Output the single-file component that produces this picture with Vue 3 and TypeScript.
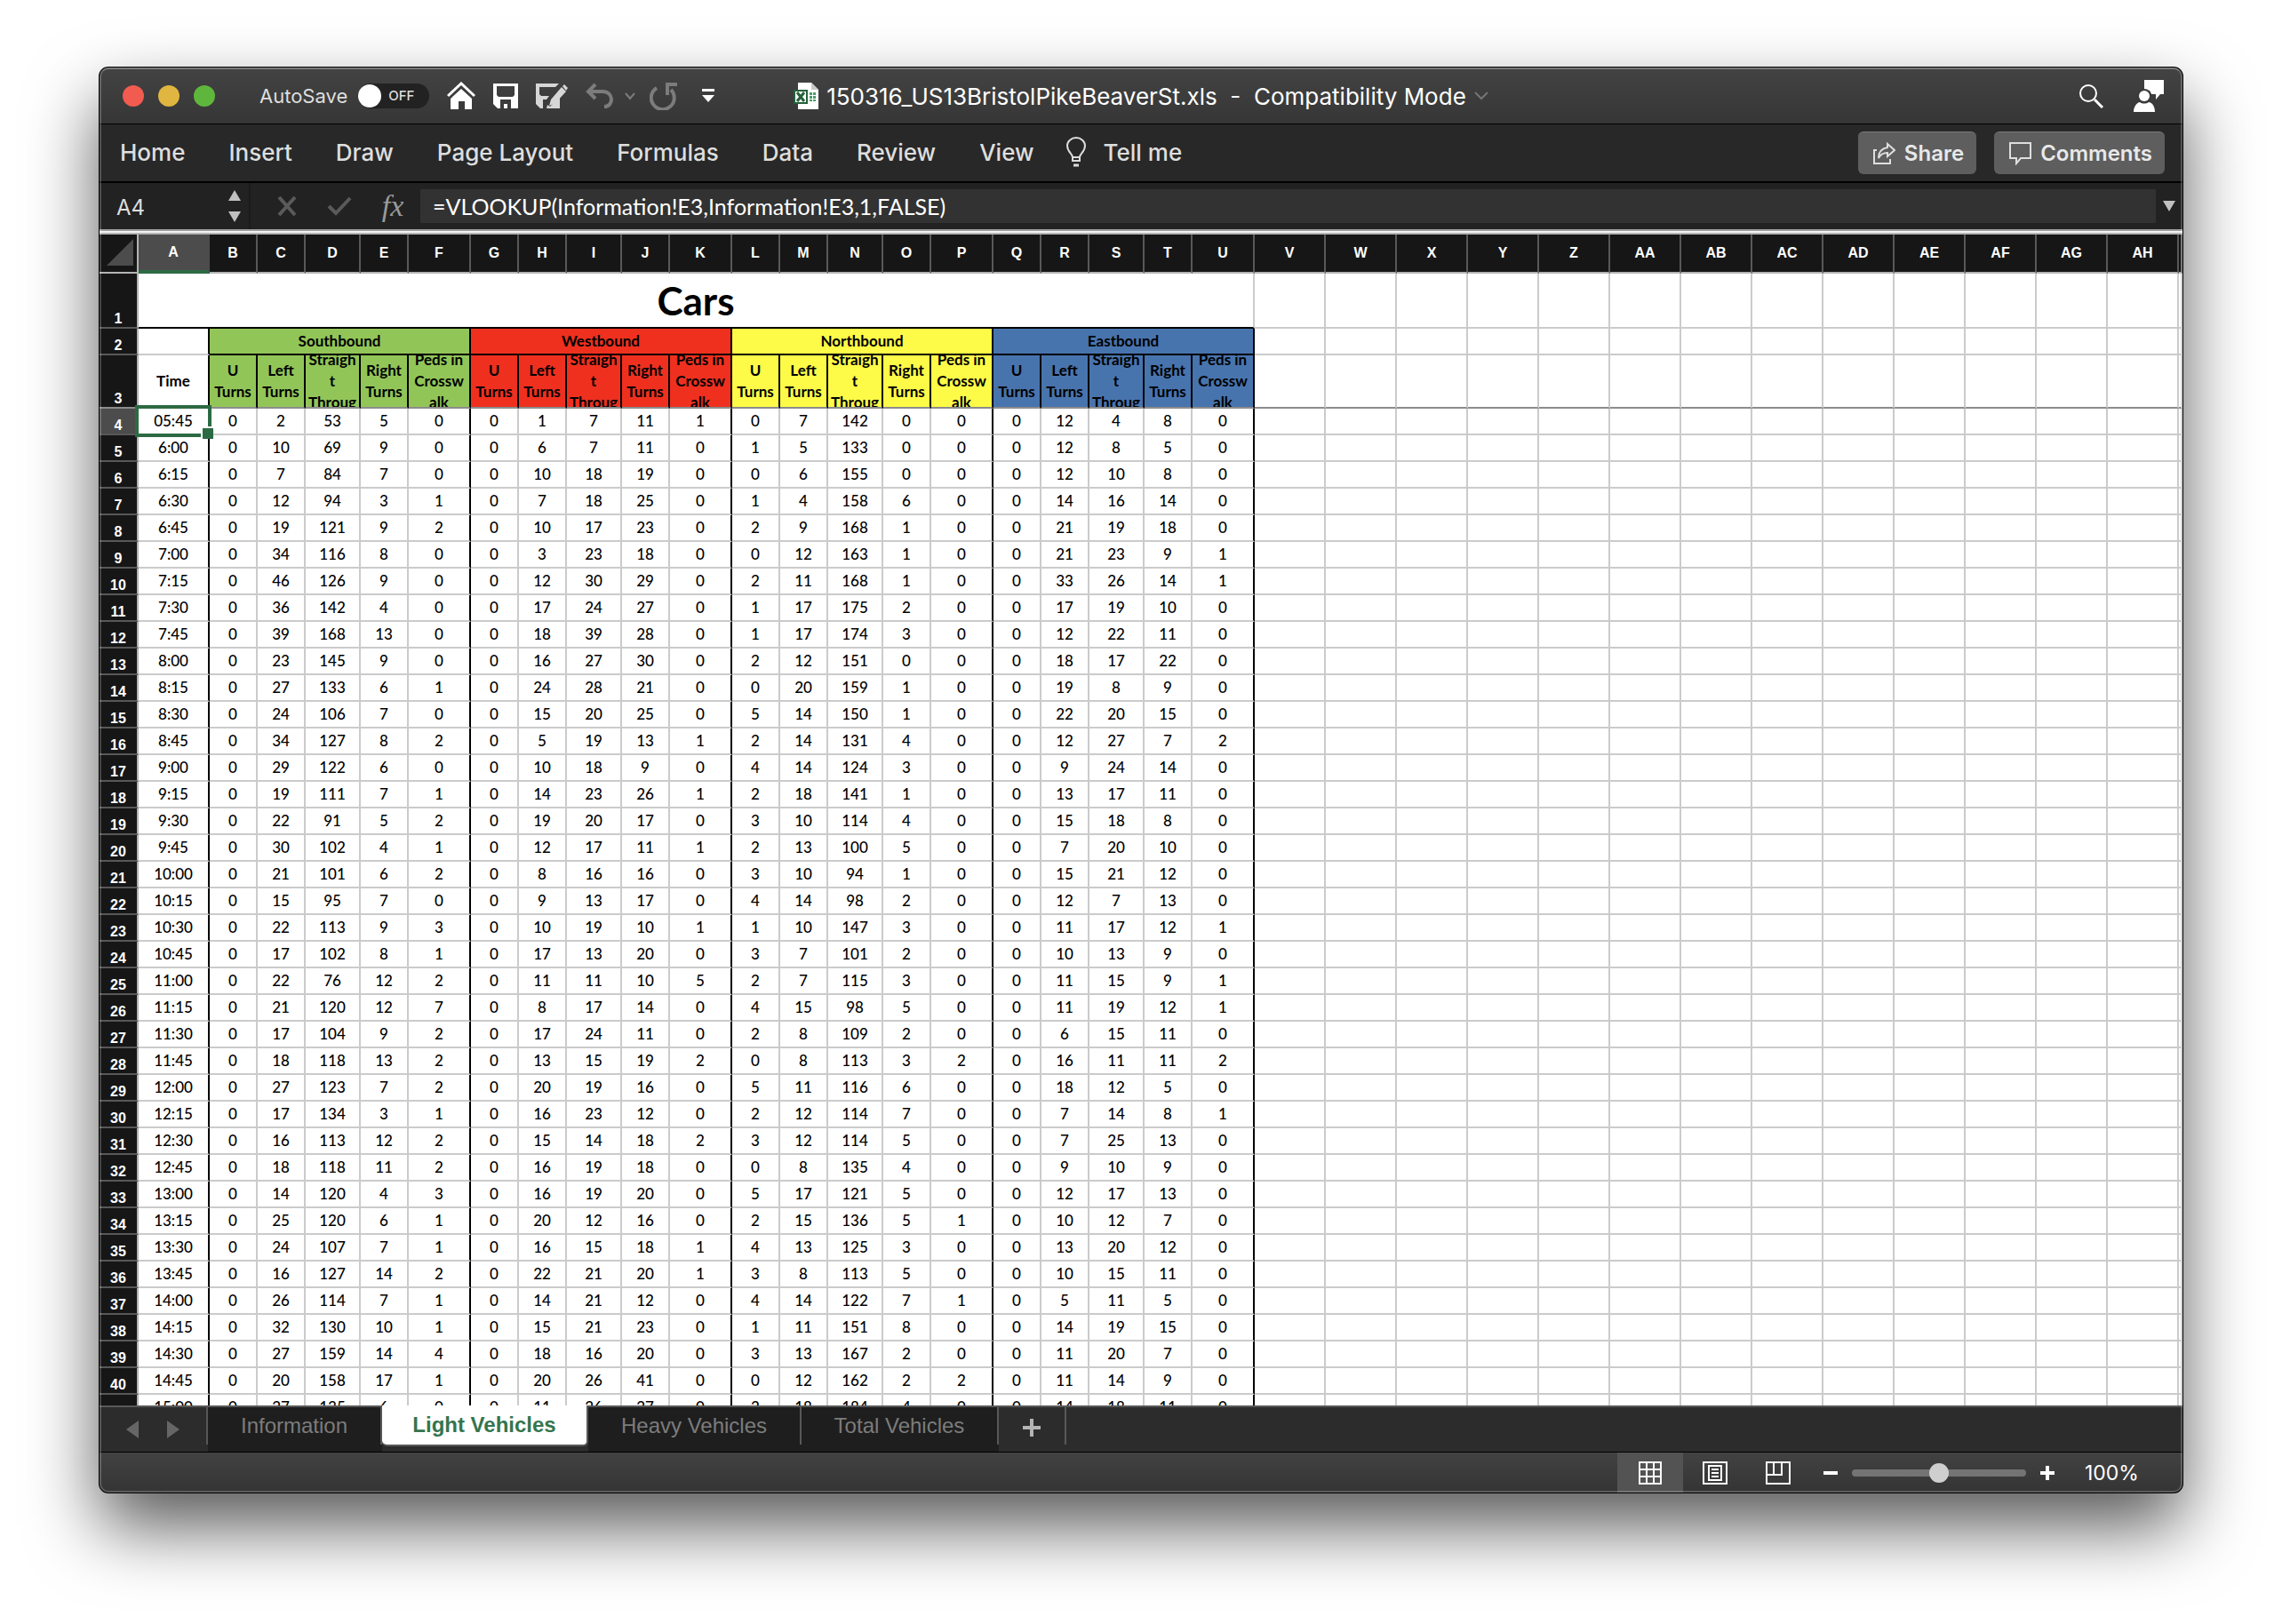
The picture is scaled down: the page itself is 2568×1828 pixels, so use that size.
<script setup lang="ts">
import { ref } from 'vue'

interface Column {
  name: string
  width: number
}

interface Group {
  name: string
  tone: string
}

interface SheetTab {
  name: string
  width: number
}

const ribbonTabs = ['Home', 'Insert', 'Draw', 'Page Layout', 'Formulas', 'Data', 'Review', 'View']

const groups: Group[] = [
  { name: 'Southbound', tone: 'green' },
  { name: 'Westbound', tone: 'red' },
  { name: 'Northbound', tone: 'yellow' },
  { name: 'Eastbound', tone: 'blue' },
]

const movements: string[][] = [
  ['U', 'Turns'],
  ['Left', 'Turns'],
  ['Straigh', 't', 'Throug'],
  ['Right', 'Turns'],
  ['Peds in', 'Crossw', 'alk'],
]

const movementWidths = [54, 54, 62, 54, 70]

function columnName(index: number): string {
  const letter = String.fromCharCode(65 + (index % 26))
  return index < 26 ? letter : 'A' + letter
}

const columns: Column[] = Array.from({ length: 34 }, (_, i) => ({
  name: columnName(i),
  width: i >= 1 && i <= 20 ? movementWidths[(i - 1) % 5] : 80,
}))

// Columns V and onward hold no data; the last one is the sliver at the window edge.
const emptyCount = 14

const rows: string[][] = `
05:45 0 2 53 5 0 0 1 7 11 1 0 7 142 0 0 0 12 4 8 0
6:00 0 10 69 9 0 0 6 7 11 0 1 5 133 0 0 0 12 8 5 0
6:15 0 7 84 7 0 0 10 18 19 0 0 6 155 0 0 0 12 10 8 0
6:30 0 12 94 3 1 0 7 18 25 0 1 4 158 6 0 0 14 16 14 0
6:45 0 19 121 9 2 0 10 17 23 0 2 9 168 1 0 0 21 19 18 0
7:00 0 34 116 8 0 0 3 23 18 0 0 12 163 1 0 0 21 23 9 1
7:15 0 46 126 9 0 0 12 30 29 0 2 11 168 1 0 0 33 26 14 1
7:30 0 36 142 4 0 0 17 24 27 0 1 17 175 2 0 0 17 19 10 0
7:45 0 39 168 13 0 0 18 39 28 0 1 17 174 3 0 0 12 22 11 0
8:00 0 23 145 9 0 0 16 27 30 0 2 12 151 0 0 0 18 17 22 0
8:15 0 27 133 6 1 0 24 28 21 0 0 20 159 1 0 0 19 8 9 0
8:30 0 24 106 7 0 0 15 20 25 0 5 14 150 1 0 0 22 20 15 0
8:45 0 34 127 8 2 0 5 19 13 1 2 14 131 4 0 0 12 27 7 2
9:00 0 29 122 6 0 0 10 18 9 0 4 14 124 3 0 0 9 24 14 0
9:15 0 19 111 7 1 0 14 23 26 1 2 18 141 1 0 0 13 17 11 0
9:30 0 22 91 5 2 0 19 20 17 0 3 10 114 4 0 0 15 18 8 0
9:45 0 30 102 4 1 0 12 17 11 1 2 13 100 5 0 0 7 20 10 0
10:00 0 21 101 6 2 0 8 16 16 0 3 10 94 1 0 0 15 21 12 0
10:15 0 15 95 7 0 0 9 13 17 0 4 14 98 2 0 0 12 7 13 0
10:30 0 22 113 9 3 0 10 19 10 1 1 10 147 3 0 0 11 17 12 1
10:45 0 17 102 8 1 0 17 13 20 0 3 7 101 2 0 0 10 13 9 0
11:00 0 22 76 12 2 0 11 11 10 5 2 7 115 3 0 0 11 15 9 1
11:15 0 21 120 12 7 0 8 17 14 0 4 15 98 5 0 0 11 19 12 1
11:30 0 17 104 9 2 0 17 24 11 0 2 8 109 2 0 0 6 15 11 0
11:45 0 18 118 13 2 0 13 15 19 2 0 8 113 3 2 0 16 11 11 2
12:00 0 27 123 7 2 0 20 19 16 0 5 11 116 6 0 0 18 12 5 0
12:15 0 17 134 3 1 0 16 23 12 0 2 12 114 7 0 0 7 14 8 1
12:30 0 16 113 12 2 0 15 14 18 2 3 12 114 5 0 0 7 25 13 0
12:45 0 18 118 11 2 0 16 19 18 0 0 8 135 4 0 0 9 10 9 0
13:00 0 14 120 4 3 0 16 19 20 0 5 17 121 5 0 0 12 17 13 0
13:15 0 25 120 6 1 0 20 12 16 0 2 15 136 5 1 0 10 12 7 0
13:30 0 24 107 7 1 0 16 15 18 1 4 13 125 3 0 0 13 20 12 0
13:45 0 16 127 14 2 0 22 21 20 1 3 8 113 5 0 0 10 15 11 0
14:00 0 26 114 7 1 0 14 21 12 0 4 14 122 7 1 0 5 11 5 0
14:15 0 32 130 10 1 0 15 21 23 0 1 11 151 8 0 0 14 19 15 0
14:30 0 27 159 14 4 0 18 16 20 0 3 13 167 2 0 0 11 20 7 0
14:45 0 20 158 17 1 0 20 26 41 0 0 12 162 2 2 0 11 14 9 0
15:00 0 27 135 6 0 0 11 26 27 0 2 18 184 4 0 0 14 18 11 0
`
  .trim()
  .split('\n')
  .map((line) => line.split(' '))

const sheetTabs: SheetTab[] = [
  { name: 'Information', width: 196 },
  { name: 'Light Vehicles', width: 232 },
  { name: 'Heavy Vehicles', width: 240 },
  { name: 'Total Vehicles', width: 222 },
]

const activeSheet = ref('Light Vehicles')
const autoSave = ref(false)
const cellName = ref('A4')
const formula = ref('=VLOOKUP(Information!E3,Information!E3,1,FALSE)')
const zoom = ref(100)
</script>

<template>
  <div class="desktop">
    <main class="window">
      <header class="titlebar">
        <div class="title-left">
          <div class="lights">
            <button class="light close" aria-label="Close"></button>
            <button class="light minimise" aria-label="Minimise"></button>
            <button class="light full" aria-label="Full screen"></button>
          </div>
          <label class="autosave">
            <span>AutoSave</span>
            <span class="switch">
              <input v-model="autoSave" type="checkbox" />
              <span class="switch-text">OFF</span>
            </span>
          </label>
          <div class="quick">
            <button aria-label="Home">
              <svg width="32" height="32" viewBox="0 0 32 32">
                <path d="M1 16 16 2l15 14" fill="none" stroke="#fff" stroke-width="3" />
                <path d="M4 19 16 8l12 11v12h-8v-9h-7v9H4z" fill="#fff" />
              </svg>
            </button>
            <button aria-label="Save">
              <svg width="28" height="28" viewBox="0 0 28 28">
                <path fill="#fff" fill-rule="evenodd" d="M0 0h28v28H5l-5-5zM4 3v10l2 2h16l2-2V3zM8 18v10h4v-5h4v5h4V18z" />
              </svg>
            </button>
            <button aria-label="Save As">
              <svg width="36" height="28" viewBox="0 0 36 28">
                <path fill="#d6d6d6" fill-rule="evenodd" d="M0 0h26l-4 4H4v8l2 2h9l-3 4H8v10h4l1-4 3 2 11-12v14H5l-5-5z" />
                <path fill="#d6d6d6" d="m17 18 12-14 5 5-12 13-7 3zM30 3l2-2 4 4-2 3z" />
              </svg>
            </button>
            <button class="undo" aria-label="Undo">
              <svg width="32" height="30" viewBox="0 0 32 30">
                <path d="M11 2 3 10l8 8M3 10h16c13 0 13 17 2 17" fill="none" stroke="#7c7c7c" stroke-width="4" />
              </svg>
            </button>
            <button class="undo-more" aria-label="Undo history">
              <svg width="12" height="10" viewBox="0 0 12 10">
                <path d="m1 2 5 6 5-6" fill="none" stroke="#7c7c7c" stroke-width="2" />
              </svg>
            </button>
            <button class="redo" aria-label="Repeat">
              <svg width="32" height="32" viewBox="0 0 32 32">
                <path d="M8 7a13 13 0 1 0 16 2M20 15V3h11" fill="none" stroke="#7c7c7c" stroke-width="4" />
              </svg>
            </button>
            <button class="more" aria-label="Customise toolbar">
              <svg width="16" height="16" viewBox="0 0 16 16">
                <path d="M1 0h14v3H1zM1 7h14l-7 8z" fill="#fff" />
              </svg>
            </button>
          </div>
        </div>
        <div class="document">
          <svg width="28" height="30" viewBox="0 0 28 30">
            <path d="M5 0h15l8 8v22H5z" fill="#fff" />
            <path d="M20 0v8h8z" fill="#c9c9c9" />
            <path d="M0 8h16v16H0z" fill="#25613c" />
            <path d="M2 10h12v12H2z" fill="#fff" />
            <path d="m4 11 8 10M12 11 4 21" stroke="#25613c" stroke-width="3" />
            <path d="M18 11h3v3h-3zM22 11h3v3h-3zM18 15h3v3h-3zM22 15h3v3h-3zM18 19h3v2h-3zM22 19h3v2h-3z" fill="#4b9b68" />
          </svg>
          <h1>150316_US13BristolPikeBeaverSt.xls&nbsp; -&nbsp; Compatibility Mode</h1>
          <svg width="16" height="10" viewBox="0 0 16 10">
            <path d="m1 1 7 7 7-7" fill="none" stroke="#757575" stroke-width="2" />
          </svg>
        </div>
        <div class="title-right">
          <button aria-label="Search">
            <svg width="28" height="28" viewBox="0 0 28 28">
              <g fill="none" stroke="#fff" stroke-width="2">
                <circle cx="11" cy="11" r="9" />
                <path d="m18 18 9 9" stroke-width="3" />
              </g>
            </svg>
          </button>
          <button aria-label="Account">
            <svg width="36" height="36" viewBox="0 0 36 36">
              <path d="M13 0h22v16h-4l-5 6v-6h-5l-2-4-6-1z" fill="#fff" />
              <circle cx="13" cy="18" r="8" fill="#3b3b3b" />
              <circle cx="13" cy="18" r="6" fill="#fff" />
              <path d="M1 36c0-6 4-11 7-11 3 2 7 2 10 0 4 0 7 5 7 11z" fill="#fff" />
            </svg>
          </button>
        </div>
      </header>

      <div class="ribbon">
        <nav class="ribbon-tabs">
          <button v-for="tab in ribbonTabs" :key="tab">{{ tab }}</button>
        </nav>
        <button class="tell">
          <svg width="22" height="34" viewBox="0 0 22 34">
            <g fill="none" stroke="#dcdcdc" stroke-width="2">
              <path d="M7 27v-4c0-4-6-6-6-13a10 9 0 0 1 20 0c0 7-6 9-6 13v4zM7 23h8" />
              <path d="M8 32h6" stroke-width="3" />
            </g>
          </svg>
          Tell me
        </button>
        <div class="actions">
          <button class="action">
            <svg width="25" height="26" viewBox="0 0 25 26">
              <g fill="none" stroke="#dedede" stroke-width="2">
                <path d="M4 9H1v15h18v-5" />
                <path d="M6 18c0-8 4-11 10-12V2l8 7-8 7v-4c-5 0-8 2-10 6z" />
              </g>
            </svg>
            Share
          </button>
          <button class="action">
            <svg width="25" height="26" viewBox="0 0 25 26">
              <path d="M1 1h23v17H13l-5 6v-6H1z" fill="none" stroke="#dedede" stroke-width="2" />
            </svg>
            Comments
          </button>
        </div>
      </div>

      <div class="formula-bar">
        <div class="name-box">
          <input v-model="cellName" aria-label="Name box" />
          <div class="stepper">
            <button aria-label="Previous"><svg width="14" height="12" viewBox="0 0 14 12"><path d="M7 0l7 12H0z" fill="#c0c0c0" /></svg></button>
            <button aria-label="Next"><svg width="14" height="12" viewBox="0 0 14 12"><path d="M7 12 0 0h14z" fill="#c0c0c0" /></svg></button>
          </div>
        </div>
        <button class="cancel" aria-label="Cancel">
          <svg width="22" height="22" viewBox="0 0 22 22"><path d="m2 1 18 20M20 1 2 21" stroke="#5a5a5a" stroke-width="4" /></svg>
        </button>
        <button class="enter" aria-label="Enter">
          <svg width="28" height="22" viewBox="0 0 28 22"><path d="m2 11 8 8L26 2" fill="none" stroke="#5a5a5a" stroke-width="4" /></svg>
        </button>
        <button class="fx" aria-label="Insert function">fx</button>
        <input v-model="formula" class="formula" aria-label="Formula" />
        <button class="expand" aria-label="Expand formula bar">
          <svg width="14" height="12" viewBox="0 0 14 12"><path d="M7 12 0 0h14z" fill="#c0c0c0" /></svg>
        </button>
      </div>

      <section class="sheet">
        <table>
          <colgroup>
            <col class="row-col" />
            <col v-for="c in columns" :key="c.name" :style="{ width: c.width + 'px' }" />
            <col />
          </colgroup>
          <thead>
            <tr class="letters">
              <th class="corner">
                <svg width="30" height="30" viewBox="0 0 30 30"><path d="M30 0v30H0z" fill="#4c4c4c" /></svg>
              </th>
              <th v-for="c in columns" :key="c.name" :class="{ current: c.name === 'A' }">{{ c.name }}</th>
              <th></th>
            </tr>
          </thead>
          <tbody>
            <tr class="row-title">
              <th class="num">1</th>
              <td colspan="21" class="heading">Cars</td>
              <td v-for="n in emptyCount" :key="n"></td>
            </tr>
            <tr>
              <th class="num">2</th>
              <td class="edge"></td>
              <td v-for="g in groups" :key="g.name" colspan="5" class="group" :class="g.tone">{{ g.name }}</td>
              <td v-for="n in emptyCount" :key="n"></td>
            </tr>
            <tr class="row-movements">
              <th class="num">3</th>
              <td class="edge time">Time</td>
              <template v-for="g in groups" :key="g.name">
                <td v-for="(m, i) in movements" :key="i" class="movement" :class="g.tone">
                  <div class="lines">
                    <span v-for="part in m" :key="part">{{ part }}</span>
                  </div>
                </td>
              </template>
              <td v-for="n in emptyCount" :key="n"></td>
            </tr>
            <tr v-for="(r, ri) in rows" :key="ri">
              <th class="num" :class="{ current: ri === 0 }">{{ ri + 4 }}</th>
              <td v-for="(v, ci) in r" :key="ci" :class="{ edge: ci % 5 === 0, selected: ri === 0 && ci === 0 }">
                {{ v }}<i v-if="ri === 0 && ci === 0" class="outline"></i>
              </td>
              <td v-for="n in emptyCount" :key="n"></td>
            </tr>
          </tbody>
        </table>
      </section>

      <footer>
        <div class="tabbar">
          <div class="tab-nav">
            <button aria-label="Previous sheet"><svg width="14" height="20" viewBox="0 0 14 20"><path d="M14 0v20L0 10z" fill="#666" /></svg></button>
            <button aria-label="Next sheet"><svg width="14" height="20" viewBox="0 0 14 20"><path d="M0 0v20l14-10z" fill="#666" /></svg></button>
          </div>
          <div
            v-for="tab in sheetTabs"
            :key="tab.name"
            class="tab-slot"
            :class="{ active: tab.name === activeSheet }"
            :style="{ width: tab.width + 'px' }"
          >
            <button @click="activeSheet = tab.name">{{ tab.name }}</button>
          </div>
          <div class="tab-slot add">
            <button aria-label="New sheet">
              <svg width="20" height="20" viewBox="0 0 20 20"><path d="M8 0h4v8h8v4h-8v8H8v-8H0V8h8z" fill="#b4b4b4" /></svg>
            </button>
          </div>
        </div>
        <div class="statusbar">
          <button class="view on" aria-label="Normal view">
            <svg width="26" height="26" viewBox="0 0 26 26">
              <path d="M1 1h24v24H1zM9 1v24M17 1v24M1 9h24M1 17h24" fill="none" stroke="#fff" stroke-width="2" />
            </svg>
          </button>
          <button class="view" aria-label="Page layout view">
            <svg width="28" height="26" viewBox="0 0 28 26">
              <path d="M1 1h26v24H1zM7 5h14v16H7zM10 9h8M10 13h8M10 17h8" fill="none" stroke="#fff" stroke-width="2" />
            </svg>
          </button>
          <button class="view" aria-label="Page break view">
            <svg width="28" height="26" viewBox="0 0 28 26">
              <path d="M1 1h26v24H1zM9 1v14M18 1v14H1" fill="none" stroke="#fff" stroke-width="2" />
            </svg>
          </button>
          <button class="zoom-out" aria-label="Zoom out">
            <svg width="16" height="16" viewBox="0 0 16 16"><path d="M0 6h16v4H0z" fill="#fff" /></svg>
          </button>
          <input v-model.number="zoom" type="range" min="0" max="200" aria-label="Zoom" />
          <button aria-label="Zoom in">
            <svg width="16" height="16" viewBox="0 0 16 16"><path d="M6 0h4v6h6v4h-6v6H6v-6H0V6h6z" fill="#fff" /></svg>
          </button>
          <output>{{ zoom }}%</output>
        </div>
      </footer>
    </main>
  </div>
</template>

<style>
body {
  margin: 0;
  background: #fff;
}
</style>

<style scoped>
* {
  box-sizing: border-box;
}

.desktop {
  display: flex;
  height: 100vh;
  padding: 76px 112px 148px;
  font-family: Inter, "Liberation Sans", sans-serif;
}

button,
input {
  margin: 0;
  padding: 0;
  border: 0;
  border-radius: 0;
  background: none;
  color: inherit;
  font: inherit;
  outline: 0;
}

button {
  display: flex;
  align-items: center;
  justify-content: center;
  white-space: nowrap;
}

svg {
  display: block;
  flex: none;
}

.window {
  position: relative;
  display: flex;
  flex: 1;
  flex-direction: column;
  min-width: 0;
  overflow: hidden;
  border-radius: 10px;
  background: #2c2c2c;
  color: #dedede;
  box-shadow: 0 0 0 1px #000, 0 38px 80px rgba(0, 0, 0, 0.66);
}

/* Light rim along the inside of the window frame */
.window::after {
  position: absolute;
  z-index: 3;
  inset: 0;
  border: 2px solid rgba(255, 255, 255, 0.2);
  border-top-color: rgba(255, 255, 255, 0.3);
  border-radius: 10px;
  pointer-events: none;
  content: "";
}

.titlebar {
  display: grid;
  flex: none;
  grid-template-columns: 1fr auto 1fr;
  align-items: center;
  height: 64px;
  border-bottom: 1px solid #000;
  background: linear-gradient(#434343, #363636);
}

.title-left,
.lights,
.autosave,
.quick,
.document,
.title-right {
  display: flex;
  align-items: center;
}

.lights {
  gap: 16px;
  margin-left: 26px;
}

.light {
  width: 24px;
  height: 24px;
  border-radius: 50%;
}

.close {
  background: #f25b50;
}

.minimise {
  background: #e0b640;
}

.full {
  background: #5fb63d;
}

.autosave {
  gap: 12px;
  margin-left: 50px;
  font-size: 22px;
}

.switch {
  display: flex;
  align-items: center;
  gap: 8px;
  width: 80px;
  height: 28px;
  border-radius: 14px;
  background: #222;
}

.switch input {
  width: 26px;
  height: 26px;
  border-radius: 50%;
  background: #fff;
  appearance: none;
}

.switch-text {
  font-size: 15px;
  font-weight: 500;
}

.quick {
  gap: 20px;
  margin-left: 20px;
}

.undo-more {
  margin-left: -8px;
}

.redo {
  margin-left: -4px;
}

.more {
  margin-left: 6px;
}

.document {
  gap: 9px;
  color: #fff;
}

.document h1 {
  margin: 0;
  padding-top: 2px;
  font-size: 26px;
  font-weight: 400;
}

.title-right {
  justify-content: flex-end;
  gap: 33px;
  margin-right: 20px;
}

.ribbon {
  display: flex;
  flex: none;
  align-items: center;
  height: 66px;
  padding: 0 20px 0 23px;
  border-bottom: 2px solid #000;
  background: #282828;
  font-size: 26px;
  font-weight: 500;
}

.ribbon-tabs {
  display: flex;
  gap: 49px;
}

.tell {
  gap: 20px;
  margin-left: 36px;
}

.ribbon-tabs,
.tell {
  padding-bottom: 2px;
}

.actions {
  display: flex;
  gap: 20px;
  margin-left: auto;
}

.action {
  gap: 10px;
  height: 48px;
  padding: 0 14px 0 17px;
  border-top: 1px solid #7a7a7a;
  border-radius: 6px;
  background: #5e5e5e;
  color: #e8e8e8;
  font-size: 24px;
  font-weight: 600;
}

.formula-bar {
  display: flex;
  flex: none;
  align-items: center;
  height: 52px;
  background: #222;
}

.name-box {
  display: flex;
  align-items: center;
  width: 170px;
  height: 52px;
  padding: 0 9px 0 19px;
  border-right: 2px solid #1b1b1b;
}

.name-box input {
  flex: 1;
  min-width: 0;
  padding-top: 2px;
  font-size: 24px;
}

.stepper {
  display: grid;
  gap: 12px;
}

.cancel {
  margin-left: 30px;
}

.enter {
  margin-left: 34px;
}

.fx {
  width: 32px;
  margin-left: 30px;
  color: #9a9a9a;
  font: italic 34px "Liberation Serif", serif;
}

.formula {
  flex: 1;
  min-width: 0;
  height: 38px;
  margin: 0 8px 0 15px;
  padding: 0 14px;
  background: #323232;
  color: #fff;
  font-family: Lato, sans-serif;
  font-size: 25px;
}

.expand {
  margin-right: 8px;
}

.sheet {
  flex: 1;
  min-height: 0;
  overflow: hidden;
  border-top: 2px solid #a0a0a0;
  background: #fff;
  color: #000;
  font-family: Lato, sans-serif;
}

.sheet::before {
  display: block;
  height: 4px;
  background: linear-gradient(#f2f2f2 50%, #b4b4b4 50%);
  content: "";
}

table {
  width: 100%;
  border-spacing: 0;
  table-layout: fixed;
}

.row-col {
  width: 44px;
}

th,
td {
  height: 30px;
  padding: 0;
  border: 0 solid #cbcbcb;
  border-width: 0 2px 2px 0;
  font-size: 17px;
  font-weight: 500;
  line-height: 24px;
  text-align: center;
  white-space: nowrap;
}

.letters th {
  height: 44px;
  border-right-color: #585858;
  border-bottom-color: #b4b4b4;
  background: #161616;
  color: #fff;
  font: 700 16px "Liberation Sans", sans-serif;
}

.letters .corner {
  padding: 0 0 2px 8px;
  border-right-color: #b4b4b4;
}

.letters .current {
  border-right-color: #4c4c4c;
  border-bottom: 4px solid #2c6a43;
  background: #4c4c4c;
}

.num {
  border-right-color: #b4b4b4;
  border-bottom-color: #585858;
  background: #161616;
  color: #fff;
  font: 700 16px/18px "Liberation Sans", sans-serif;
  vertical-align: bottom;
}

.num.current {
  background: #4c4c4c;
}

.row-title th,
.row-title td {
  height: 62px;
}

.row-title .heading {
  border-right-color: #cbcbcb;
  border-bottom-color: #000;
  font-size: 44px;
  font-weight: 700;
}

.edge,
.group,
.movement {
  border-right-color: #000;
}

.group,
.movement,
.time {
  font-weight: 700;
}

.group {
  border-bottom-color: #000;
}

.row-movements th,
.row-movements td {
  height: 60px;
  border-bottom-color: #8c8c8c;
}

.lines {
  display: flex;
  flex-direction: column;
  align-items: center;
  justify-content: center;
  height: 58px;
  overflow: hidden;
}

.lines span {
  flex: none;
}

.green {
  background: #92c558;
}

.red {
  background: #ef301f;
}

.yellow {
  background: #fefb48;
}

.blue {
  background: #4874ae;
}

.selected {
  position: relative;
}

.outline {
  position: absolute;
  z-index: 1;
  inset: -4px;
  border: 4px solid #2c6a43;
}

.outline::after {
  position: absolute;
  right: -6px;
  bottom: -6px;
  width: 12px;
  height: 12px;
  border: 0 solid #fff;
  border-width: 2px 0 0 2px;
  background: #2c6a43;
  content: "";
}

.tabbar {
  display: flex;
  height: 52px;
  border-top: 2px solid #585858;
  background: #2c2c2c;
  color: #7c7c7c;
  font-family: "Liberation Sans", sans-serif;
  font-size: 24px;
}

.tab-nav {
  display: flex;
  gap: 32px;
  width: 122px;
  height: 42px;
  padding: 8px 0 0 30px;
  border-right: 2px solid #585858;
}

.tab-slot {
  background: #1e1e1e;
}

.tab-slot button {
  width: 100%;
  height: 42px;
  border-right: 2px solid #585858;
}

.tab-slot.active {
  position: relative;
  z-index: 1;
  margin-top: -2px;
  background: #2c2c2c;
}

.tab-slot.active button {
  height: 46px;
  border: 0 solid #585858;
  border-width: 0 2px 2px 0;
  border-radius: 0 0 6px 6px;
  background: #fff;
  color: #34754d;
  font-weight: 700;
}

.tab-slot.add {
  width: 76px;
  background: none;
}

.tab-slot.add button {
  padding-top: 4px;
}

.statusbar {
  display: flex;
  align-items: center;
  justify-content: flex-end;
  height: 46px;
  padding-right: 48px;
  border-top: 1px solid #000;
  background: linear-gradient(#424242, #343434);
  color: #fff;
}

.view {
  width: 71px;
  height: 45px;
}

.view.on {
  width: 74px;
  background: #535353;
}

.zoom-out {
  margin-left: 16px;
}

.statusbar input {
  width: 196px;
  height: 8px;
  margin: 0 16px;
  border-radius: 4px;
  background: #747474;
  appearance: none;
}

.statusbar input::-webkit-slider-thumb {
  width: 22px;
  height: 22px;
  border-radius: 50%;
  background: #cfcfcf;
  appearance: none;
}

.statusbar output {
  width: 62px;
  margin-left: 34px;
  font-size: 23px;
}
</style>
